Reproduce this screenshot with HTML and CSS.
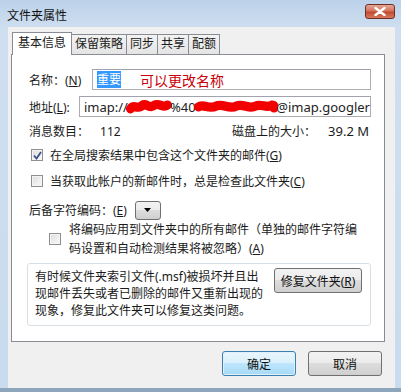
FILE: index.html
```html
<!DOCTYPE html>
<html lang="zh-CN">
<head>
  <meta charset="UTF-8" />
  <title>文件夹属性</title>
  <link rel="stylesheet" href="styles.css">
</head>
<body>
  <div class="window">
    <div class="titlebar">
      <span class="title">文件夹属性</span>
      <span class="close">
        <svg width="12" height="9" viewBox="0 0 12 9"><path d="M1.5 1 L10.5 8 M10.5 1 L1.5 8" stroke="#fff" stroke-width="2.4" stroke-linecap="round"/></svg>
      </span>
    </div>
    <div class="client">
      <div class="tabs">
        <span class="tab active">基本信息</span>
        <span class="tab">保留策略</span>
        <span class="tab">同步</span>
        <span class="tab">共享</span>
        <span class="tab">配额</span>
      </div>
      <div class="panel">
        <div class="row name-row">
          <span class="label">名称：(<u>N</u>)</span>
          <div class="field name-field">
            <span class="sel">重要</span>
            <span class="note">可以更改名称</span>
          </div>
        </div>
        <div class="row addr-row">
          <span class="label">地址(<u>L</u>):</span>
          <div class="field addr-field">
            <span>imap://</span>
            <svg class="scribble s1" width="50" height="19" viewBox="0 0 50 19"><path d="M5 12 C9 6 13 14 18 8 C22 5 26 13 31 8 C36 5 41 12 45 8" stroke="#f20000" stroke-width="10" fill="none" stroke-linecap="round"/></svg>
            <span>%40</span>
            <svg class="scribble s2" width="92" height="19" viewBox="0 0 92 19"><path d="M5 10 C10 6 16 13 24 9 C32 6 38 13 46 9 C54 6 60 13 67 9 C73 6 79 12 85 8 C87 8 88 10 87 11" stroke="#f20000" stroke-width="10" fill="none" stroke-linecap="round"/></svg>
            <span>@imap.googler</span>
          </div>
        </div>
        <div class="row info-row">
          <span>消息数目：</span>
          <span class="num">112</span>
          <span class="spacer"></span>
          <span>磁盘上的大小：</span>
          <span class="size">39.2 M</span>
        </div>
        <div class="row check-row c1">
          <span class="box checked">
            <svg width="9" height="9" viewBox="0 0 9 9"><path d="M1 4.5 L3.5 7.5 L8 1" stroke="#3a4f8a" stroke-width="1.8" fill="none"/></svg>
          </span>
          <span>在全局搜索结果中包含这个文件夹的邮件(<u>G</u>)</span>
        </div>
        <div class="row check-row c2">
          <span class="box"></span>
          <span>当获取此帐户的新邮件时，总是检查此文件夹(<u>C</u>)</span>
        </div>
        <div class="row enc-row">
          <span>后备字符编码：(<u>E</u>)</span>
          <span class="dropdown">
            <svg width="7" height="4" viewBox="0 0 7 4"><path d="M0 0 H7 L3.5 4 Z" fill="#000"/></svg>
          </span>
        </div>
        <div class="row multi-check">
          <span class="box"></span>
          <span class="multi-text">将编码应用到文件夹中的所有邮件（单独的邮件字符编<br>码设置和自动检测结果将被忽略）(<u>A</u>)</span>
        </div>
        <div class="group">
          <p class="group-text">有时候文件夹索引文件(.msf)被损坏并且出<br>现邮件丢失或者已删除的邮件又重新出现的<br>现象，修复此文件夹可以修复这类问题。</p>
          <button class="btn repair">修复文件夹(<u>R</u>)</button>
        </div>
      </div>
      <div class="actions">
        <button class="btn ok">确定</button>
        <button class="btn">取消</button>
      </div>
    </div>
  </div>
</body>
</html>
```

FILE: styles.css
```css
html, body {
  margin: 0;
  padding: 0;
}
body {
  width: 401px;
  height: 392px;
  overflow: hidden;
  font-family: "Noto Sans", "Noto Sans CJK SC", sans-serif;
  font-size: 12px;
  color: #1a1a1a;
}
.window {
  box-sizing: border-box;
  height: 392px;
  display: flex;
  flex-direction: column;
  padding: 0 6px 0 8px;
  background: linear-gradient(to bottom, #bcd2ea 0, #cfdff0 30px, #c9dbee 100%);
  border-bottom: 4px solid #8ea6bb;
}
.titlebar {
  height: 27px;
  display: flex;
  align-items: flex-start;
  justify-content: space-between;
}
.title {
  margin: 6px 0 0 -1px;
  font-size: 12px;
  color: #111;
}
.close {
  width: 30px;
  height: 15px;
  margin-top: 4px;
  box-sizing: border-box;
  border: 1px solid #6b2d24;
  border-radius: 3px;
  background: linear-gradient(to bottom, #e5a894 0, #d4735e 45%, #c24a31 55%, #d77a5c 100%);
  display: flex;
  align-items: center;
  justify-content: center;
}
.client {
  flex: 1;
  background: #f0f0f0;
  padding: 5px 10px 0 3px;
  display: flex;
  flex-direction: column;
}
.tabs {
  display: flex;
  align-items: flex-end;
  height: 22px;
  padding-left: 1px;
  position: relative;
  z-index: 1;
}
.tab {
  box-sizing: border-box;
  height: 20px;
  line-height: 18px;
  padding: 0 3px;
  border: 1px solid #898c95;
  border-bottom: none;
  margin-right: -1px;
  background: linear-gradient(to bottom, #f3f3f3, #e4e4e4);
}
.tab.active {
  height: 23px;
  margin-bottom: -1px;
  padding: 1px 5px 0;
  background: #fff;
}
.panel {
  box-sizing: border-box;
  height: 288px;
  background: #fff;
  border: 1px solid #898c95;
  padding: 14px 13px 0 17px;
}
.row {
  display: flex;
  align-items: center;
}
.field {
  box-sizing: border-box;
  flex: 1;
  height: 21px;
  border: 1px solid #abadb3;
  border-top-color: #9ea3ad;
  display: flex;
  align-items: center;
  padding-left: 4px;
  white-space: nowrap;
  overflow: hidden;
}
.name-row .label {
  width: 63px;
}
.addr-row {
  margin-top: 6px;
}
.addr-row .label {
  width: 50px;
}
.sel {
  background: #3399ff;
  color: #fff;
  padding: 1px 0;
  line-height: 15px;
}
.note {
  margin-left: 19px;
  color: #c8000a;
  font-size: 14px;
}
.addr-field {
  font-size: 13px;
  padding-left: 4px;
  color: #222;
}
.scribble {
  margin: 0 -2px;
}
.info-row {
  margin-top: 5px;
  height: 18px;
  padding-right: 2px;
}
.num {
  margin-left: 11px;
}
.spacer {
  flex: 1;
}
.size {
  margin-left: 12px;
  font-size: 13px;
}
.check-row {
  height: 18px;
  padding-left: 2px;
}
.c1 {
  margin-top: 6px;
}
.c2 {
  margin-top: 8px;
}
.box {
  box-sizing: border-box;
  width: 12px;
  height: 12px;
  border: 1px solid #8e8f8f;
  background: linear-gradient(135deg, #dcdcdc, #fbfbfb);
  box-shadow: inset 0 0 0 1px #f4f4f4;
  margin-right: 7px;
  display: flex;
  align-items: center;
  justify-content: center;
  flex-shrink: 0;
}
.enc-row {
  margin-top: 10px;
  height: 20px;
}
.dropdown {
  box-sizing: border-box;
  width: 26px;
  height: 19px;
  margin-left: 8px;
  border: 1px solid #707070;
  border-radius: 3px;
  background: linear-gradient(to bottom, #f2f2f2 0, #ebebeb 50%, #dddddd 50%, #cfcfcf 100%);
  display: flex;
  align-items: center;
  justify-content: center;
}
.multi-check {
  padding-left: 20px;
}
.multi-text {
  line-height: 19px;
  margin-left: 1px;
}
.group {
  box-sizing: border-box;
  height: 63px;
  margin: 5px 0 0 -2px;
  border: 1px solid #d5dfe5;
  border-radius: 3px;
  display: flex;
  align-items: flex-start;
  justify-content: space-between;
  padding: 4px 8px 0 7px;
}
.group-text {
  margin: 0;
  line-height: 17px;
}
.btn {
  box-sizing: border-box;
  font-family: inherit;
  font-size: 12px;
  color: #111;
  border: 1px solid #707070;
  border-radius: 3px;
  background: linear-gradient(to bottom, #f2f2f2 0, #ebebeb 50%, #dddddd 50%, #cfcfcf 100%);
  padding: 0;
}
.repair {
  width: 88px;
  height: 25px;
}
.actions {
  display: flex;
  justify-content: flex-end;
  gap: 12px;
  margin-top: 9px;
  padding-right: 3px;
}
.actions .btn {
  width: 74px;
  height: 25px;
}
.btn.ok {
  border-color: #3c7fb1;
  background: linear-gradient(to bottom, #eaf6fd 0, #d9f0fc 50%, #bee6fd 50%, #a7d9f5 100%);
  box-shadow: inset 0 0 0 1px #dff1fb;
}
```
